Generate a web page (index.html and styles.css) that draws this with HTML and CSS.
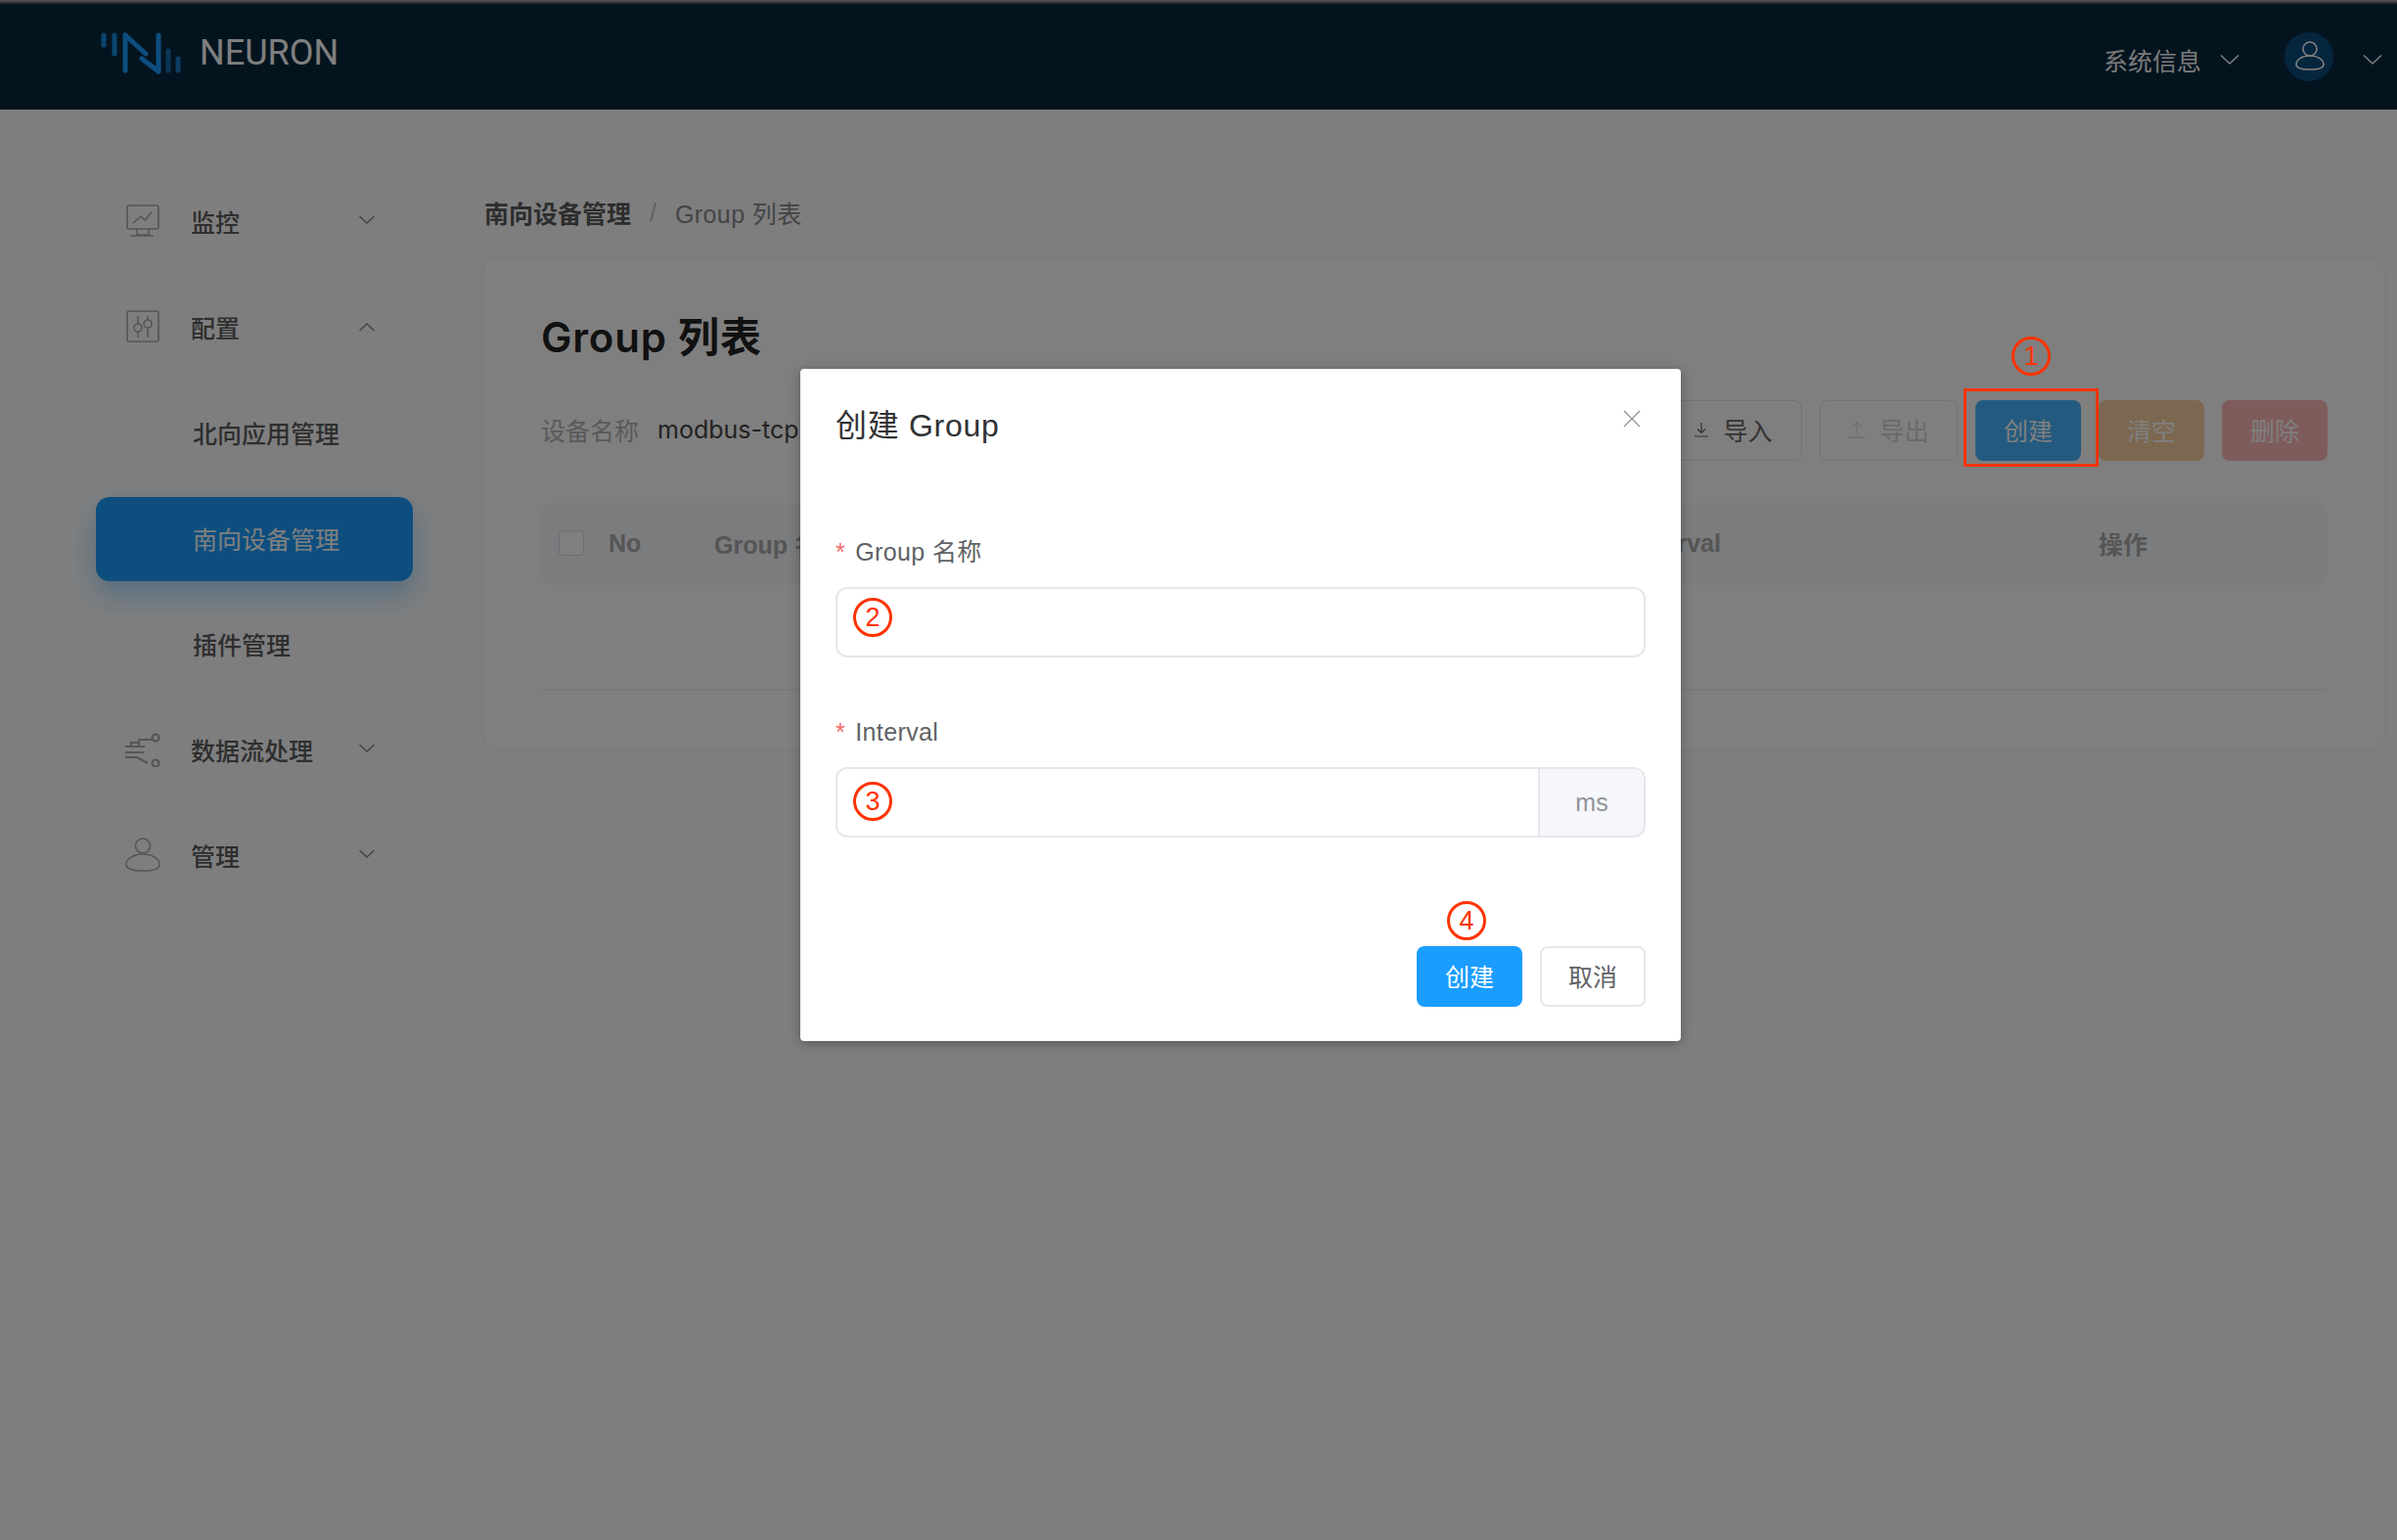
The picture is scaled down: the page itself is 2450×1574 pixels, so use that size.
FILE: index.html
```html
<!DOCTYPE html>
<html lang="en">
<head>
  <meta charset="UTF-8">
  <title>Neuron</title>
  <link rel="stylesheet" href="styles.css">
</head>
<body>
  <div class="top-strip"></div>
  <header class="top-bar">
    <div class="logo">
      <svg class="logo-mark" width="84" height="44" viewBox="0 0 84 44">
        <g fill="none" stroke="#1a9dff" stroke-width="5" stroke-linecap="round">
          <path d="M3 4V14" opacity=".85"/>
          <path d="M14 4V23" opacity=".85"/>
          <path d="M25 4V40"/>
          <path d="M25 4L46 23"/>
          <path d="M42 28L59 41"/>
          <path d="M59 4V41"/>
          <path d="M69 20V40" opacity=".6"/>
          <path d="M79 28V40" opacity=".7"/>
        </g>
      </svg>
      <span class="logo-text">NEURON</span>
    </div>
    <div class="top-right">
      <span class="sys-info">系统信息</span>
      <svg class="chevron top-chev" width="20" height="12" viewBox="0 0 20 12"><path d="M1 1.5L10 10L19 1.5"/></svg>
      <span class="avatar">
        <svg width="32" height="32" viewBox="0 0 32 32" fill="none" stroke="#fff" stroke-width="1.6">
          <circle cx="17" cy="8" r="7"/>
          <path d="M3 24c0-5 6-9 14-9s14 4 14 9c0 4-6 5-14 5s-14-1-14-5z"/>
        </svg>
      </span>
      <svg class="chevron" width="20" height="12" viewBox="0 0 20 12"><path d="M1 1.5L10 10L19 1.5"/></svg>
    </div>
  </header>

  <div class="layout">
    <nav class="side-nav">
      <div class="nav-item">
        <svg class="nav-icon" width="36" height="36" viewBox="0 0 36 36" fill="none" stroke="#aaa" stroke-width="1.6">
          <rect x="2" y="2" width="32" height="24" rx="2"/>
          <path d="M8 20L16 13L20 17L27 9"/>
          <path d="M12 26V32H24V26M5 33H29"/>
        </svg>
        <span class="nav-label">监控</span>
        <svg class="chevron nav-chev" width="16" height="9" viewBox="0 0 16 9"><path d="M.5 1L8 8L15.5 1"/></svg>
      </div>
      <div class="nav-item">
        <svg class="nav-icon" width="36" height="36" viewBox="0 0 36 36" fill="none" stroke="#aaa" stroke-width="1.6">
          <rect x="2" y="2" width="32" height="31" rx="2"/>
          <path d="M13 7V15M13 23V29M23 7V11M23 19V29"/>
          <circle cx="13" cy="19" r="4"/>
          <circle cx="23" cy="15" r="4"/>
        </svg>
        <span class="nav-label">配置</span>
        <svg class="chevron nav-chev up" width="16" height="9" viewBox="0 0 16 9"><path d="M.5 8L8 1L15.5 8"/></svg>
      </div>
      <div class="nav-item sub">北向应用管理</div>
      <div class="nav-item sub active">南向设备管理</div>
      <div class="nav-item sub">插件管理</div>
      <div class="nav-item">
        <svg class="nav-icon" width="36" height="36" viewBox="0 0 36 36" fill="none" stroke="#aaa" stroke-width="2.2">
          <path d="M0 15H20M0 21H19M0 26H12L23 32"/>
          <path d="M14 15V8H27M6 15V11H14"/>
          <circle cx="31" cy="6" r="3.5"/>
          <circle cx="31" cy="32" r="3.5"/>
        </svg>
        <span class="nav-label">数据流处理</span>
        <svg class="chevron nav-chev" width="16" height="9" viewBox="0 0 16 9"><path d="M.5 1L8 8L15.5 1"/></svg>
      </div>
      <div class="nav-item">
        <svg class="nav-icon" width="38" height="38" viewBox="0 0 38 38" fill="none" stroke="#aaa" stroke-width="1.6">
          <circle cx="19" cy="9" r="8"/>
          <path d="M1 29c0-6 8-11 18-11s18 5 18 11c0 5-8 7-18 7s-18-2-18-7z"/>
        </svg>
        <span class="nav-label">管理</span>
        <svg class="chevron nav-chev" width="16" height="9" viewBox="0 0 16 9"><path d="M.5 1L8 8L15.5 1"/></svg>
      </div>
    </nav>

    <main class="content">
      <div class="crumbs">
        <span class="crumb-first">南向设备管理</span>
        <span class="crumb-sep">/</span>
        <span class="crumb-last">Group 列表</span>
      </div>
      <section class="card">
        <h1 class="card-title">Group 列表</h1>
        <div class="toolbar">
          <span class="device-label">设备名称</span>
          <span class="device-name">modbus-tcp</span>
          <div class="toolbar-btns">
            <button class="btn plain">
              <svg width="16" height="16" viewBox="0 0 16 16" fill="none" stroke="currentColor" stroke-width="1.2"><path d="M8 1V11M4 7.5L8 11.5L12 7.5M1 15H15"/></svg>
              导入
            </button>
            <button class="btn plain muted">
              <svg width="18" height="18" viewBox="0 0 20 20" fill="none" stroke="currentColor" stroke-width="1.2"><path d="M10 15V2M5 7L10 2L15 7M1 19H19"/></svg>
              导出
            </button>
            <button class="btn create">创建</button>
            <button class="btn clear">清空</button>
            <button class="btn remove">删除</button>
          </div>
        </div>
        <div class="table-head">
          <span class="check"></span>
          <span class="col col-no">No</span>
          <span class="col col-group">Group 名称</span>
          <span class="col col-interval">Interval</span>
          <span class="col col-ops">操作</span>
        </div>
        <div class="table-body"></div>
      </section>
    </main>
  </div>

  <div class="overlay"></div>

  <span class="mark-box"></span>
  <span class="mark mark-1">1</span>

  <div class="dialog">
    <div class="dialog-title">创建 Group</div>
    <svg class="dialog-close" width="18" height="18" viewBox="0 0 18 18" fill="none" stroke="#909399" stroke-width="1.3"><path d="M1 1L17 17M17 1L1 17"/></svg>
    <div class="form-item">
      <label class="form-label"><span class="star">*</span>Group 名称</label>
      <div class="input-box">
        <span class="mark mark-name">2</span>
      </div>
    </div>
    <div class="form-item">
      <label class="form-label"><span class="star">*</span>Interval</label>
      <div class="input-box">
        <span class="mark mark-interval">3</span>
        <span class="addon">ms</span>
      </div>
    </div>
    <div class="dialog-foot">
      <button class="btn primary">
        <span class="mark mark-4">4</span>
        创建
      </button>
      <button class="btn cancel">取消</button>
    </div>
  </div>
</body>
</html>
```
FILE: styles.css
```css
* {
  box-sizing: border-box;
}
body {
  margin: 0;
  min-height: 1574px;
  position: relative;
  overflow: hidden;
  background: #fcfdff;
  font-family: "Liberation Sans", "Noto Sans CJK SC", sans-serif;
  font-size: 25px;
}
.top-strip {
  height: 4px;
  background: linear-gradient(#999 0 2px, #555 2px);
}
.top-bar {
  height: 108px;
  background: #08283e;
  display: flex;
  justify-content: space-between;
  padding: 0 15px 0 103px;
  color: #fff;
}
.logo {
  display: flex;
  align-items: flex-start;
  padding-top: 28px;
}
.logo-mark {
  margin-right: 17px;
}
.logo-text {
  font-family: Roboto, sans-serif;
  font-size: 36px;
  line-height: 46px;
  margin-top: -1px;
}
.top-right {
  display: flex;
  align-items: center;
}
.sys-info {
  color: #f4f4f4;
  margin-top: 6px;
}
.top-chev {
  margin: 6px 46px 0 19px;
}
.chevron {
  fill: none;
  stroke: #fff;
  stroke-width: 1.5;
  margin-top: 6px;
}
.avatar {
  width: 50px;
  height: 50px;
  border-radius: 50%;
  background: #0c4c7c;
  display: flex;
  align-items: center;
  justify-content: center;
  margin-right: 30px;
}
.layout {
  display: flex;
}
.side-nav {
  width: 495px;
  flex: none;
  padding: 71px 0 0 98px;
  display: flex;
  flex-direction: column;
  gap: 22px;
}
.nav-item {
  width: 324px;
  height: 86px;
  display: flex;
  align-items: center;
  padding-left: 30px;
  color: #5c5c5c;
  position: relative;
}
.nav-icon {
  width: 36px;
  flex: none;
}
.nav-label {
  margin-left: 31px;
  font-weight: 500;
}
.nav-chev {
  stroke: #888;
  margin: -4px 39px 0 auto;
}
.nav-chev.up {
  margin-top: 0;
}
.nav-item.sub {
  padding-left: 99px;
  font-weight: 500;
}
.nav-item.active {
  background: #1a9dff;
  color: #fff;
  border-radius: 14px;
  box-shadow: 0 14px 28px rgba(26, 157, 255, .35);
  font-weight: 400;
  margin: 1px 0 -1px;
  padding-bottom: 2px;
}
.content {
  flex: 1;
  min-width: 0;
  padding: 83px 13px 0 0;
}
.crumbs {
  height: 44px;
  display: flex;
  align-items: center;
}
.crumb-first {
  font-weight: 700;
  color: #5a5a5a;
}
.crumb-sep {
  margin: 0 19px;
  color: #c0c4cc;
}
.crumb-last {
  color: #8a8a8a;
  letter-spacing: .4px;
}
.card {
  margin-top: 25px;
  height: 501px;
  background: #fff;
  border-radius: 14px;
  box-shadow: 0 0 8px rgba(0, 0, 0, .06);
  padding: 59px 58px 0 58px;
}
.card-title {
  margin: 0 0 42px;
  font-family: Inter, "Noto Sans CJK SC", sans-serif;
  font-size: 42px;
  line-height: 44px;
  font-weight: 600;
  letter-spacing: .8px;
  color: #222;
}
.toolbar {
  height: 62px;
  display: flex;
  align-items: center;
}
.device-label {
  color: #b4b4b4;
  margin-top: -3px;
}
.device-name {
  margin: -2px 0 0 19px;
  font-family: Inter, "Noto Sans CJK SC", sans-serif;
  color: #444;
}
.toolbar-btns {
  margin-left: auto;
  display: flex;
  gap: 18px;
}
.btn {
  width: 108px;
  height: 62px;
  border: 0;
  border-radius: 8px;
  font: inherit;
  color: #fff;
  padding: 0 0 2px;
}
.btn.plain {
  width: 141px;
  background: #fff;
  border: 1px solid #e4e4e4;
  color: #666;
  display: flex;
  align-items: center;
  justify-content: center;
  gap: 14px;
}
.btn.muted {
  color: #d5d5d5;
}
.btn.create {
  background: #48b4ff;
}
.btn.clear {
  background: #f8d0a0;
}
.btn.remove {
  background: #ffb8b8;
}
.table-head {
  margin-top: 43px;
  height: 84px;
  background: #f6f8fc;
  border-radius: 14px;
  display: flex;
  align-items: center;
  padding: 0 0 2px 18px;
  font-weight: 700;
  color: #aaa;
}
.check {
  width: 26px;
  height: 26px;
  background: #fff;
  border: 1px solid #dcdfe6;
  border-radius: 3px;
}
.col-no {
  margin-left: 25px;
  width: 108px;
}
.col-group {
  width: 940px;
}
.col-interval {
  width: 475px;
}
.table-body {
  height: 108px;
  border-bottom: 2px solid #f4f4f4;
}
.overlay {
  position: absolute;
  inset: 0;
  background: rgba(0, 0, 0, .5);
}
.dialog {
  position: absolute;
  left: 818px;
  top: 377px;
  width: 900px;
  height: 687px;
  background: #fff;
  border-radius: 4px;
  box-shadow: 0 2px 12px rgba(0, 0, 0, .3);
  padding: 37px 36px 36px;
  color: #303133;
}
.dialog-title {
  font-size: 32px;
  line-height: 42px;
  letter-spacing: .7px;
  margin-bottom: 90px;
}
.dialog-close {
  position: absolute;
  right: 41px;
  top: 42px;
}
.form-item {
  margin-bottom: 58px;
}
.form-label {
  display: block;
  line-height: 36px;
  margin-bottom: 18px;
  letter-spacing: .4px;
  color: #606266;
}
.star {
  color: #f56c6c;
  margin-right: 10px;
}
.input-box {
  height: 72px;
  border: 2px solid #e4e7ed;
  border-radius: 12px;
  position: relative;
  display: flex;
  justify-content: flex-end;
  overflow: hidden;
}
.addon {
  width: 108px;
  background: #f5f7fa;
  border-left: 2px solid #e4e7ed;
  color: #909399;
  display: flex;
  align-items: center;
  justify-content: center;
}
.dialog-foot {
  display: flex;
  justify-content: flex-end;
  gap: 18px;
  margin-top: 111px;
}
.btn.primary {
  background: #1a9dff;
  position: relative;
}
.btn.cancel {
  background: #fff;
  border: 2px solid #e4e7ed;
  color: #606266;
}
.mark {
  position: absolute;
  width: 40px;
  height: 40px;
  border: 3px solid #ff3300;
  border-radius: 50%;
  color: #ff3300;
  display: flex;
  align-items: center;
  justify-content: center;
  font-size: 27px;
  line-height: 1;
}
.mark-1 {
  left: 2056px;
  top: 344px;
}
.mark-name {
  left: 16px;
  top: 9px;
}
.mark-interval {
  left: 16px;
  top: 13px;
}
.mark-4 {
  left: 31px;
  top: -46px;
}
.mark-box {
  position: absolute;
  left: 2007px;
  top: 397px;
  width: 138px;
  height: 80px;
  border: 3px solid #ff3300;
}
```
